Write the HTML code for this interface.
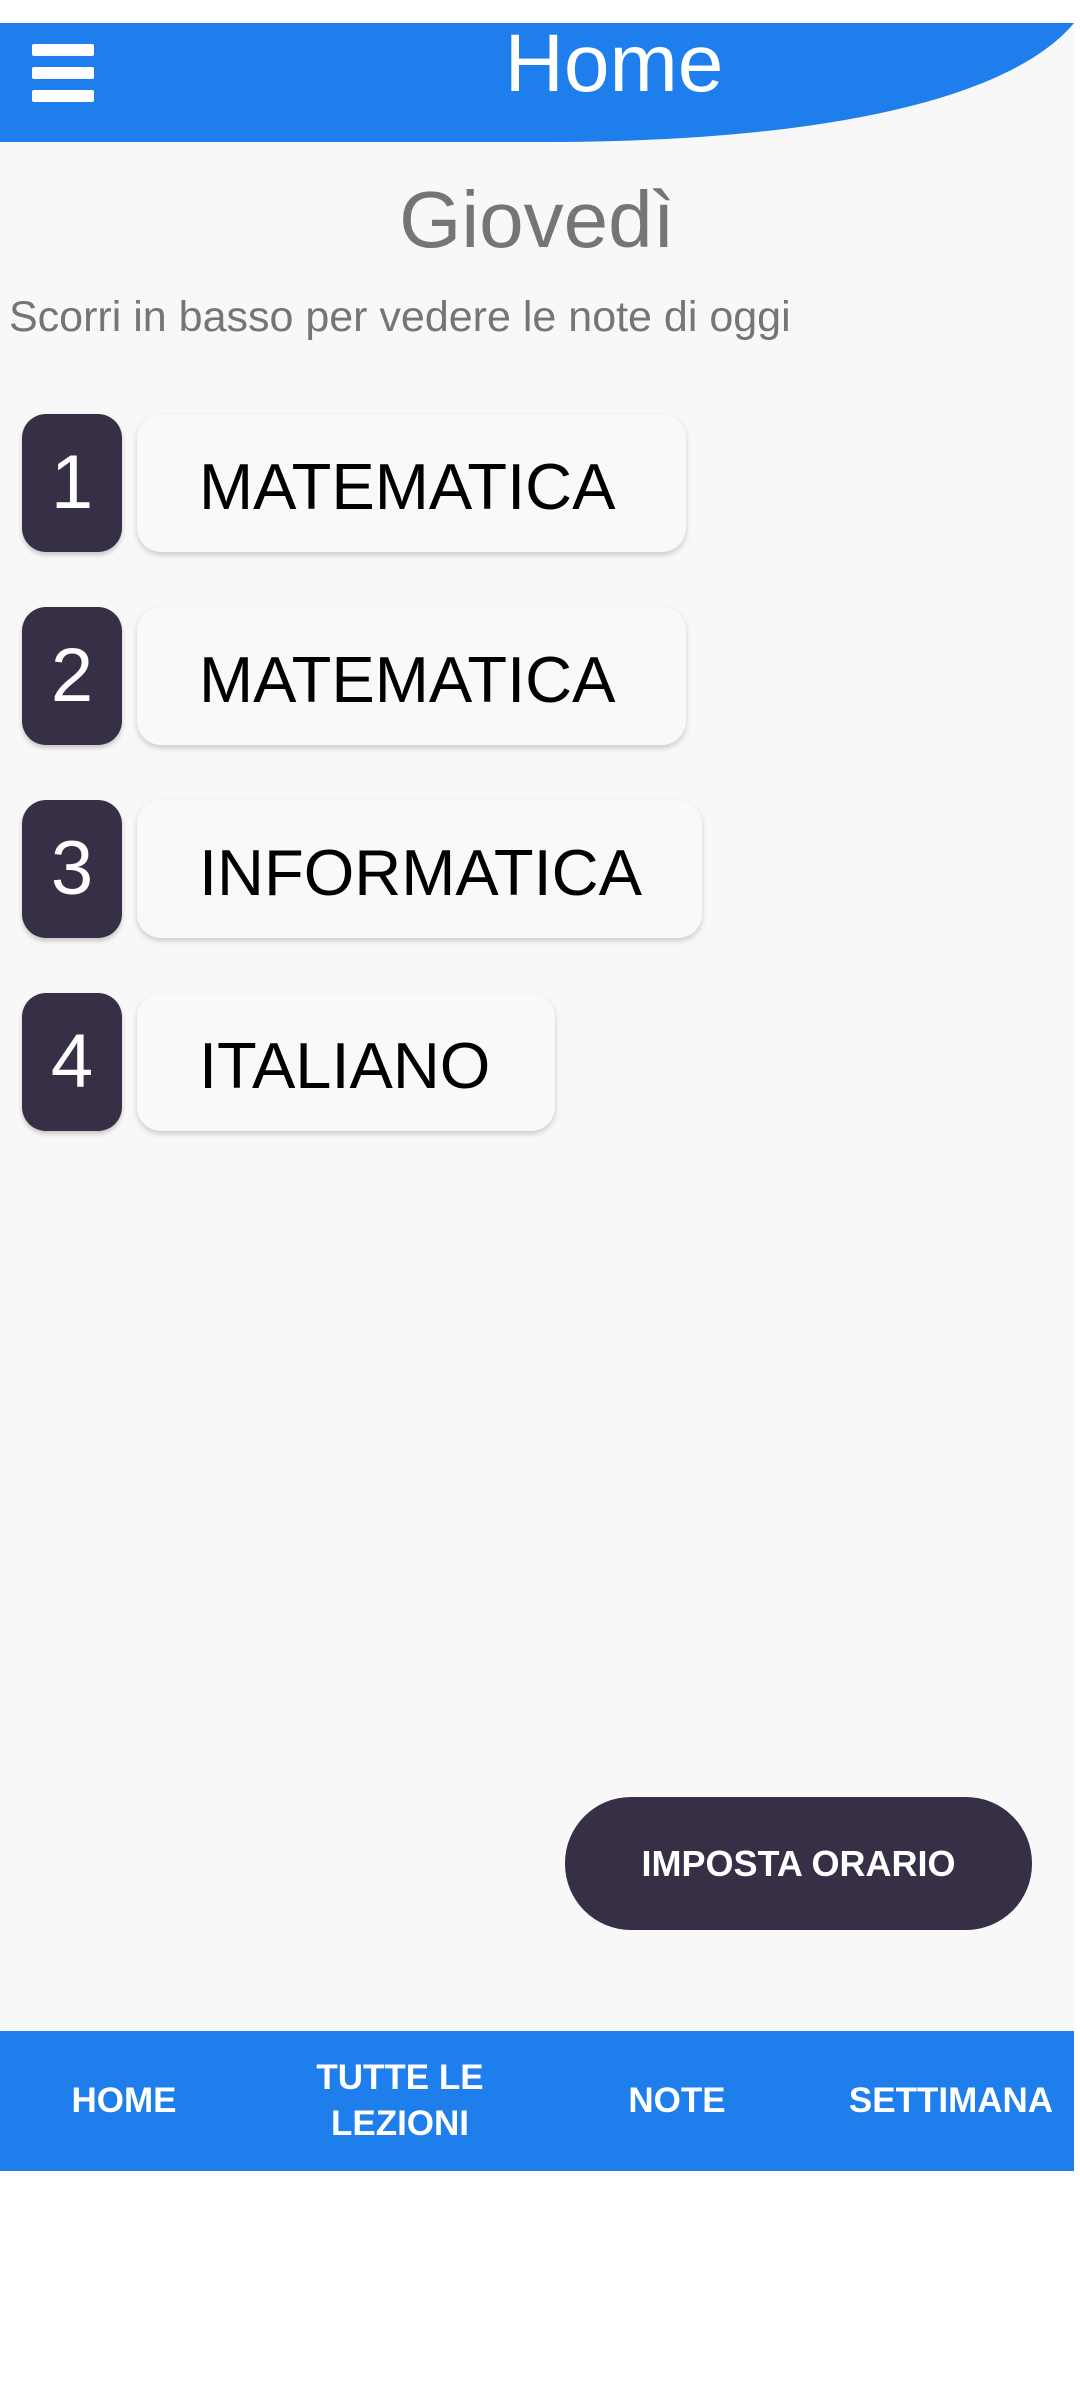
<!DOCTYPE html>
<html><head><meta charset="utf-8"><style>
html,body{margin:0;padding:0;}
body{width:1080px;height:2400px;position:relative;background:#fff;font-family:"Liberation Sans",sans-serif;overflow:hidden;}
.page{position:absolute;left:0;top:23px;width:1074px;height:2148px;background:#f8f8f8;}
.abs{position:absolute;}
.num{position:absolute;left:22px;width:100px;height:138px;background:#372f46;border-radius:24px;color:#fff;font-size:76px;text-align:center;line-height:138px;box-shadow:0 3px 5px rgba(0,0,0,.2);}
.card{position:absolute;left:137px;height:138px;background:#f9f9f9;border-radius:24px;box-shadow:0 3px 6px rgba(0,0,0,.18);padding:0 0 0 62px;box-sizing:border-box;font-size:65px;line-height:146px;color:#000;white-space:nowrap;}
.nav{position:absolute;left:0;top:2031px;width:1074px;height:140px;background:#1e7fec;color:#fff;font-size:35px;font-weight:bold;}
.nav div{position:absolute;text-align:center;transform:translateX(-50%);line-height:46px;white-space:nowrap;}
</style></head><body>
<div class="page"></div>
<svg class="abs" style="left:0;top:0" width="1080" height="150"><path d="M0,23 H1074 C1010,100 820,141 555,142 H0 Z" fill="#1e7fec"/></svg>
<div class="abs" style="left:32px;top:44px;width:62px;height:12px;background:#fff;border-radius:2px"></div>
<div class="abs" style="left:32px;top:67px;width:62px;height:12px;background:#fff;border-radius:2px"></div>
<div class="abs" style="left:32px;top:90px;width:62px;height:12px;background:#fff;border-radius:2px"></div>
<div class="abs" style="left:0;width:1228px;top:14px;text-align:center;color:#fff;font-size:82px;line-height:100px">Home</div>
<div class="abs" style="left:0;width:1074px;top:170px;text-align:center;color:#757575;font-size:80px;line-height:100px">Giovedì</div>
<div class="abs" style="left:9px;top:292px;color:#757575;font-size:43px;line-height:50px">Scorri in basso per vedere le note di oggi</div>

<div class="num" style="top:414px">1</div><div class="card" style="top:414px;width:549px">MATEMATICA</div>
<div class="num" style="top:607px">2</div><div class="card" style="top:607px;width:549px">MATEMATICA</div>
<div class="num" style="top:800px">3</div><div class="card" style="top:800px;width:565px">INFORMATICA</div>
<div class="num" style="top:993px">4</div><div class="card" style="top:993px;width:418px">ITALIANO</div>

<div class="abs" style="left:565px;top:1797px;width:467px;height:133px;background:#372f46;border-radius:66px;color:#fff;font-size:36px;font-weight:bold;text-align:center;line-height:133px">IMPOSTA ORARIO</div>

<div class="nav">
<div style="left:124px;top:47px">HOME</div>
<div style="left:400px;top:24px">TUTTE LE<br>LEZIONI</div>
<div style="left:677px;top:47px">NOTE</div>
<div style="left:951px;top:47px">SETTIMANA</div>
</div>
</body></html>
